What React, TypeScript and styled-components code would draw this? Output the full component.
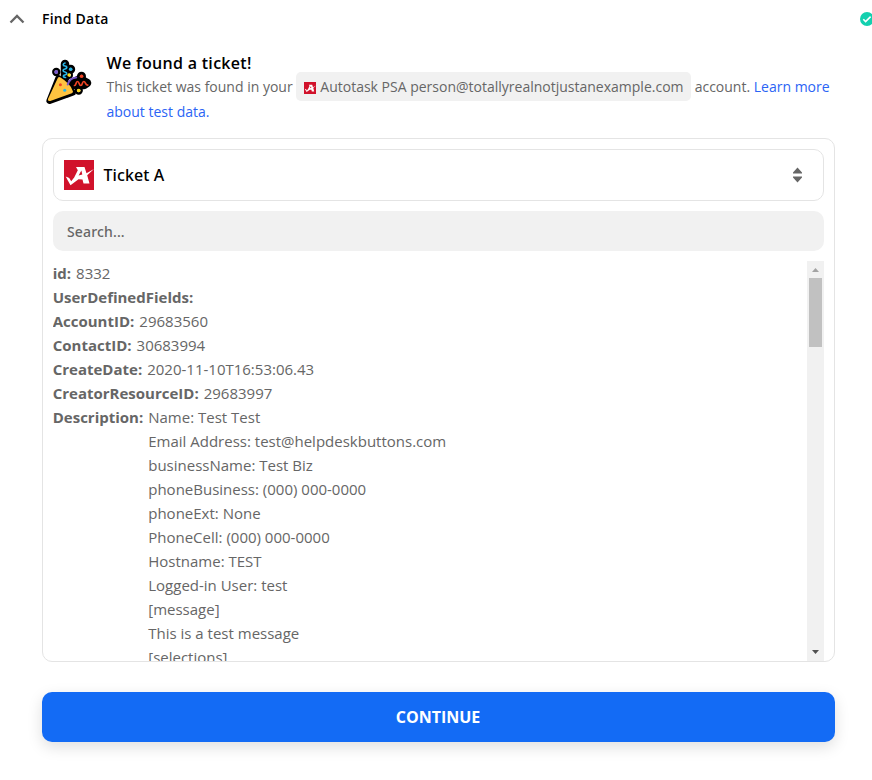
import React from "react";
import styled, { createGlobalStyle } from "styled-components";

const GlobalStyle = createGlobalStyle`
  *, *::before, *::after { box-sizing: border-box; }
  body {
    margin: 0;
    background: #fff;
    color: #666;
    font-family: "Open Sans", "Noto Sans", sans-serif;
    overflow: hidden;
  }
  svg { display: block; flex: none; }
`;

const Page = styled.main`
  height: 780px;
  overflow: hidden;
`;

const Header = styled.header`
  display: flex;
  align-items: center;
  height: 38px;
  padding-left: 9px;
`;

const HeaderTitle = styled.h1`
  flex: 1;
  margin: 0 0 0 17px;
  font-size: 14px;
  line-height: 20px;
  font-weight: 600;
  letter-spacing: 0.2px;
  color: #000;
`;

const Content = styled.section`
  width: 793px;
  margin-left: 42px;
`;

const Intro = styled.div`
  display: flex;
  height: 100px;
  padding-top: 13px;
`;

const IntroIcon = styled.div`
  width: 64.5px;
  padding: 6px 0 0 2px;
`;

const IntroText = styled.div`
  flex: 1;
`;

const Heading = styled.h2`
  margin: 0;
  font-size: 16px;
  line-height: 23px;
  padding-top: 1px;
  height: 23px;
  font-weight: 600;
  letter-spacing: 0.3px;
  color: #000;
`;

const Blurb = styled.p`
  margin: 0;
  font-size: 14px;
  line-height: 25px;
  white-space: nowrap;
`;

const AccountTag = styled.span`
  padding: 5px 7.5px 5px 8px;
  border-radius: 5px;
  background: #f1f1f1;
  svg {
    display: inline-block;
    margin-right: 4px;
    vertical-align: -2px;
  }
`;

const Link = styled.a`
  color: #2b64f5;
  text-decoration: none;
`;

const Card = styled.div`
  height: 524px;
  padding: 10px 10px 0;
  border: 1px solid #e4e4e4;
  border-radius: 10px;
  overflow: hidden;
`;

const Select = styled.button`
  display: flex;
  align-items: center;
  width: 100%;
  height: 52px;
  padding: 0 21px 0 10px;
  border: 1px solid #e4e4e4;
  border-radius: 10px;
  background: #fff;
  color: #000;
  font: 500 16px/24px "Noto Sans", sans-serif;
`;

const SelectLabel = styled.span`
  flex: 1;
  margin-left: 9.5px;
  letter-spacing: 0.1px;
  text-align: left;
`;

const Search = styled.input`
  display: block;
  width: 100%;
  height: 40px;
  margin: 10px 0;
  padding: 0 14px;
  border: 0;
  border-radius: 10px;
  background: #f1f1f1;
  font: 500 14px/20px "Noto Sans", sans-serif;
  letter-spacing: 0.15px;
  &::placeholder { color: #666; opacity: 1; }
`;

const DataPane = styled.div`
  display: flex;
  height: 400px;
  overflow: hidden;
`;

const Fields = styled.dl`
  flex: 1;
  margin: 0 0 0 -0.3px;
  font-size: 15px;
  line-height: 24px;
`;

const Field = styled.div`
  display: flex;
`;

const FieldName = styled.dt`
  margin-right: 5px;
  font-weight: 700;
`;

const FieldValue = styled.dd`
  margin: 0;
  white-space: pre-line;
`;

const Scrollbar = styled.div`
  display: flex;
  flex-direction: column;
  align-items: center;
  justify-content: space-between;
  width: 17px;
  background: #f1f1f1;
`;

const ScrollThumb = styled.div`
  width: 13px;
  height: 69px;
  margin-bottom: auto;
  background: #c1c1c1;
`;

const ContinueButton = styled.button`
  display: block;
  width: 100%;
  height: 50px;
  margin-top: 30px;
  padding: 0 1px 0 0;
  border: 0;
  border-radius: 10px;
  background: #136bf5;
  color: #fff;
  font: 700 16px/24px "Open Sans", sans-serif;
  box-shadow: 0 5px 15px rgba(0, 0, 0, 0.13);
`;

function AutotaskLogo({ size }: { size: number }) {
  return (
    <svg width={size} height={size} viewBox="0 0 30 30">
      <path fill="#d1122b" d="M0 0h30v30H0z" />
      <path
        fill="#fff"
        fillRule="evenodd"
        d="M1.7 16.6L5.2 18l2 3.2L10.2 17.600 13.800 10.200 12 7h8.500l2 6.200L30 8.900l-6.800 6.400L25.500 23.500h-6l-1-4-4-.2L6.500 25.200zM14.600 15.600l3.700-1.200-.9-4z"
      />
    </svg>
  );
}

function PartyPopper() {
  return (
    <svg width="48" height="48" viewBox="0 0 48 48" strokeLinecap="round" strokeLinejoin="round">
      <g fill="#000" stroke="#000" strokeWidth="6">
        <path d="M14.5 21.5L5.700 43.700 28.500 35.500z" strokeWidth="6.6" />
        <path d="M21 7v14M26 28l10-6 7 4-3 2H28" fill="none" strokeWidth="8.5" />
        <circle cx="12.300" cy="15" r="1.200" />
        <circle cx="26.700" cy="12.300" r="1.500" />
        <circle cx="25" cy="18" r="1" />
        <circle cx="37.500" cy="19.300" r="1.500" />
        <circle cx="34.700" cy="33.500" r="1.200" />
      </g>
      <path fill="#ffc340" d="M13.800 21q1-1.800 2.700-.6Q26 26 29 34.500q0 1.300-1.200 1.800L6.300 44Q3.300 44.500 4 42z" />
      <g fill="none" strokeWidth="1.700">
        <path stroke="#29b6e8" d="M21 6c-2.300.5-2.300 3 0 3s2.500 2.500 0 3-2.500 2.500 0 3 2 2.500-.2 3-1.500 2.500.7 2.500" />
        <path stroke="#7655c8" strokeWidth="2" d="M23.700 27.500q2-6.500 8.500-7" />
        <path stroke="#f04424" d="M30.500 28.500c2 0 1-4 3-4s1.300 4 3.300 4 1-4 3-4 1.300 4 4 3.500" />
      </g>
      <circle cx="12.200" cy="15" r="1.900" fill="#7655c8" />
      <circle cx="26.700" cy="12.300" r="1.800" fill="#29b6e8" />
      <circle cx="25" cy="18" r="1.700" fill="#ffda18" />
      <circle cx="37.600" cy="19.300" r="1.800" fill="#f04424" />
      <circle cx="34.700" cy="33.500" r="1.800" fill="#ffda18" />
      <circle cx="16.400" cy="27.700" r="1.500" fill="#f04424" />
      <circle cx="20.700" cy="33.300" r="1.500" fill="#29b6e8" />
    </svg>
  );
}

const description = [
  "Name: Test Test",
  "Email Address: test@helpdeskbuttons.com",
  "businessName: Test Biz",
  "phoneBusiness: (000) 000-0000",
  "phoneExt: None",
  "PhoneCell: (000) 000-0000",
  "Hostname: TEST",
  "Logged-in User: test",
  "[message]",
  "This is a test message",
  "[selections]",
].join("\n");

const fields: [string, string][] = [
  ["id:", "8332"],
  ["UserDefinedFields:", ""],
  ["AccountID:", "29683560"],
  ["ContactID:", "30683994"],
  ["CreateDate:", "2020-11-10T16:53:06.43"],
  ["CreatorResourceID:", "29683997"],
  ["Description:", description],
];

export default function App() {
  return (
    <Page>
      <GlobalStyle />
      <Header>
        <svg width="16" height="16" viewBox="0 0 16 16" fill="none" stroke="#666" strokeWidth="2.3">
          <path d="M1.5 11.5L8 5l6.500 6.500" />
        </svg>
        <HeaderTitle>Find Data</HeaderTitle>
        <svg width="12" height="14" viewBox="0 0 12 14">
          <circle cx="7" cy="7" r="7" fill="#13d0af" />
          <path d="M3.300 7.300l2.300 2.300 5-5" fill="none" stroke="#fff" strokeWidth="1.6" />
        </svg>
      </Header>
      <Content>
        <Intro>
          <IntroIcon>
            <PartyPopper />
          </IntroIcon>
          <IntroText>
            <Heading>We found a ticket!</Heading>
            <Blurb>
              This ticket was found in your{" "}
              <AccountTag>
                <AutotaskLogo size={12} />
                Autotask PSA person@totallyrealnotjustanexample.com
              </AccountTag>{" "}
              account. <Link>Learn more<br />about test data.</Link>
            </Blurb>
          </IntroText>
        </Intro>
        <Card>
          <Select>
            <AutotaskLogo size={30} />
            <SelectLabel>Ticket A</SelectLabel>
            <svg width="9" height="16" viewBox="0 0 8 16" preserveAspectRatio="none" fill="#666">
              <path d="M0 6.500V5.500L4 .5l4 5v1zM0 9.500h8v1l-4 5-4-5z" />
            </svg>
          </Select>
          <Search placeholder="Search..." />
          <DataPane>
            <Fields>
              {fields.map(([name, value]) => (
                <Field key={name}>
                  <FieldName>{name}</FieldName>
                  <FieldValue>{value}</FieldValue>
                </Field>
              ))}
            </Fields>
            <Scrollbar>
              <svg width="17" height="17" viewBox="0 0 17 17">
                <path fill="#a3a3a3" d="M5 11l3.500-4 3.500 4z" />
              </svg>
              <ScrollThumb />
              <svg width="17" height="17" viewBox="0 0 17 17">
                <path fill="#505050" d="M5 6h7l-3.500 4z" />
              </svg>
            </Scrollbar>
          </DataPane>
        </Card>
        <ContinueButton>CONTINUE</ContinueButton>
      </Content>
    </Page>
  );
}
